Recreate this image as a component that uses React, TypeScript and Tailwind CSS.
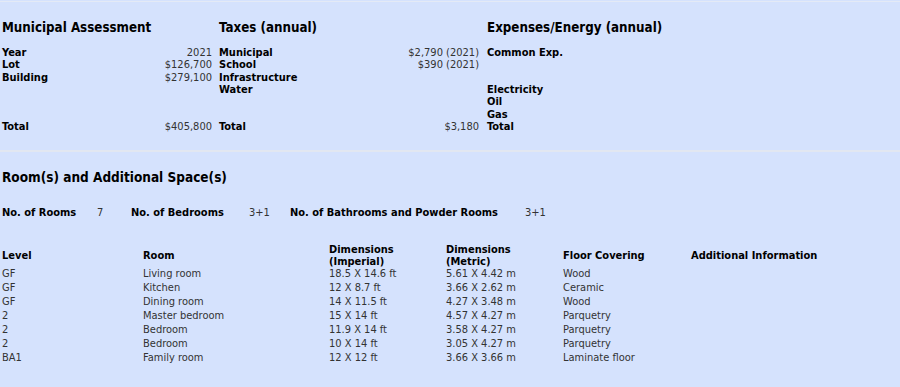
import React from "react";

const assessment = [
  ["Year", "2021", "Municipal", "$2,790 (2021)", "Common Exp."],
  ["Lot", "$126,700", "School", "$390 (2021)", ""],
  ["Building", "$279,100", "Infrastructure", "", ""],
  ["", "", "Water", "", "Electricity"],
  ["", "", "", "", "Oil"],
  ["", "", "", "", "Gas"],
  ["Total", "$405,800", "Total", "$3,180", "Total"],
];

const rooms = [
  ["GF", "Living room", "18.5 X 14.6 ft", "5.61 X 4.42 m", "Wood"],
  ["GF", "Kitchen", "12 X 8.7 ft", "3.66 X 2.62 m", "Ceramic"],
  ["GF", "Dining room", "14 X 11.5 ft", "4.27 X 3.48 m", "Wood"],
  ["2", "Master bedroom", "15 X 14 ft", "4.57 X 4.27 m", "Parquetry"],
  ["2", "Bedroom", "11.9 X 14 ft", "3.58 X 4.27 m", "Parquetry"],
  ["2", "Bedroom", "10 X 14 ft", "3.05 X 4.27 m", "Parquetry"],
  ["BA1", "Family room", "12 X 12 ft", "3.66 X 3.66 m", "Laminate floor"],
];

const App: React.FC = () => {
  return (
    <div className="w-[900px] h-[387px] overflow-hidden bg-[#d5e2fd] font-['DejaVu_Sans_Condensed','DejaVu_Sans',sans-serif] text-[11px] text-[#333]">
      <div className="h-[1px] mt-[1px] bg-[#e4eaf6]" />

      {/* Financial summary */}
      <div className="grid grid-cols-[210px_267px_1fr] pl-[2px] pt-[17px]">
        <h2 className="text-[13.25px] font-bold text-black leading-[18px] whitespace-nowrap">Municipal Assessment</h2>
        <h2 className="text-[13.25px] font-bold text-black leading-[18px] pl-[7px]">Taxes (annual)</h2>
        <h2 className="text-[13.25px] font-bold text-black leading-[18px] pl-[8px]">Expenses/Energy (annual)</h2>
      </div>
      <div className="grid grid-cols-[131px_79px_160px_107px_1fr] pl-[2px] pt-[10px] leading-[12.33px]">
        {assessment.map((row, i) => (
          <React.Fragment key={i}>
            <div className="font-bold text-black">{row[0]}</div>
            <div className="text-right">{row[1]}</div>
            <div className="font-bold text-black pl-[7px]">{row[2]}</div>
            <div className="text-right">{row[3]}</div>
            <div className="font-bold text-black pl-[8px]">{row[4]}</div>
          </React.Fragment>
        ))}
      </div>

      <div className="h-[2px] mt-[17px] bg-[#e2e7f1]" />

      {/* Rooms */}
      <h2 className="text-[13.5px] font-bold text-black leading-[18px] pl-[2px] mt-[16px]">
        Room(s) and Additional Space(s)
      </h2>
      <div className="flex items-center pl-[2px] mt-[20px] leading-[14px]">
        <span className="font-bold text-black w-[95px]">No. of Rooms</span>
        <span className="w-[34px]">7</span>
        <span className="font-bold text-black w-[118px]">No. of Bedrooms</span>
        <span className="w-[41px]">3+1</span>
        <span className="font-bold text-black w-[235px]">No. of Bathrooms and Powder Rooms</span>
        <span>3+1</span>
      </div>

      <div className="grid grid-cols-[141px_186px_117px_117px_128px_1fr] pl-[2px] mt-[24px]">
        <div className="font-bold text-black leading-[12px] self-center">Level</div>
        <div className="font-bold text-black leading-[12px] self-center">Room</div>
        <div className="font-bold text-black leading-[12px]">Dimensions<br />(Imperial)</div>
        <div className="font-bold text-black leading-[12px]">Dimensions<br />(Metric)</div>
        <div className="font-bold text-black leading-[12px] self-center">Floor Covering</div>
        <div className="font-bold text-black leading-[12px] self-center">Additional Information</div>
        {rooms.map((row, i) => (
          <React.Fragment key={i}>
            {row.map((cell, j) => (
              <div key={j} className={`leading-[14px] ${i === 0 ? "-mt-px" : ""}`}>{cell}</div>
            ))}
            <div className={i === 0 ? "-mt-px" : ""} />
          </React.Fragment>
        ))}
      </div>
    </div>
  );
};

export default App;
